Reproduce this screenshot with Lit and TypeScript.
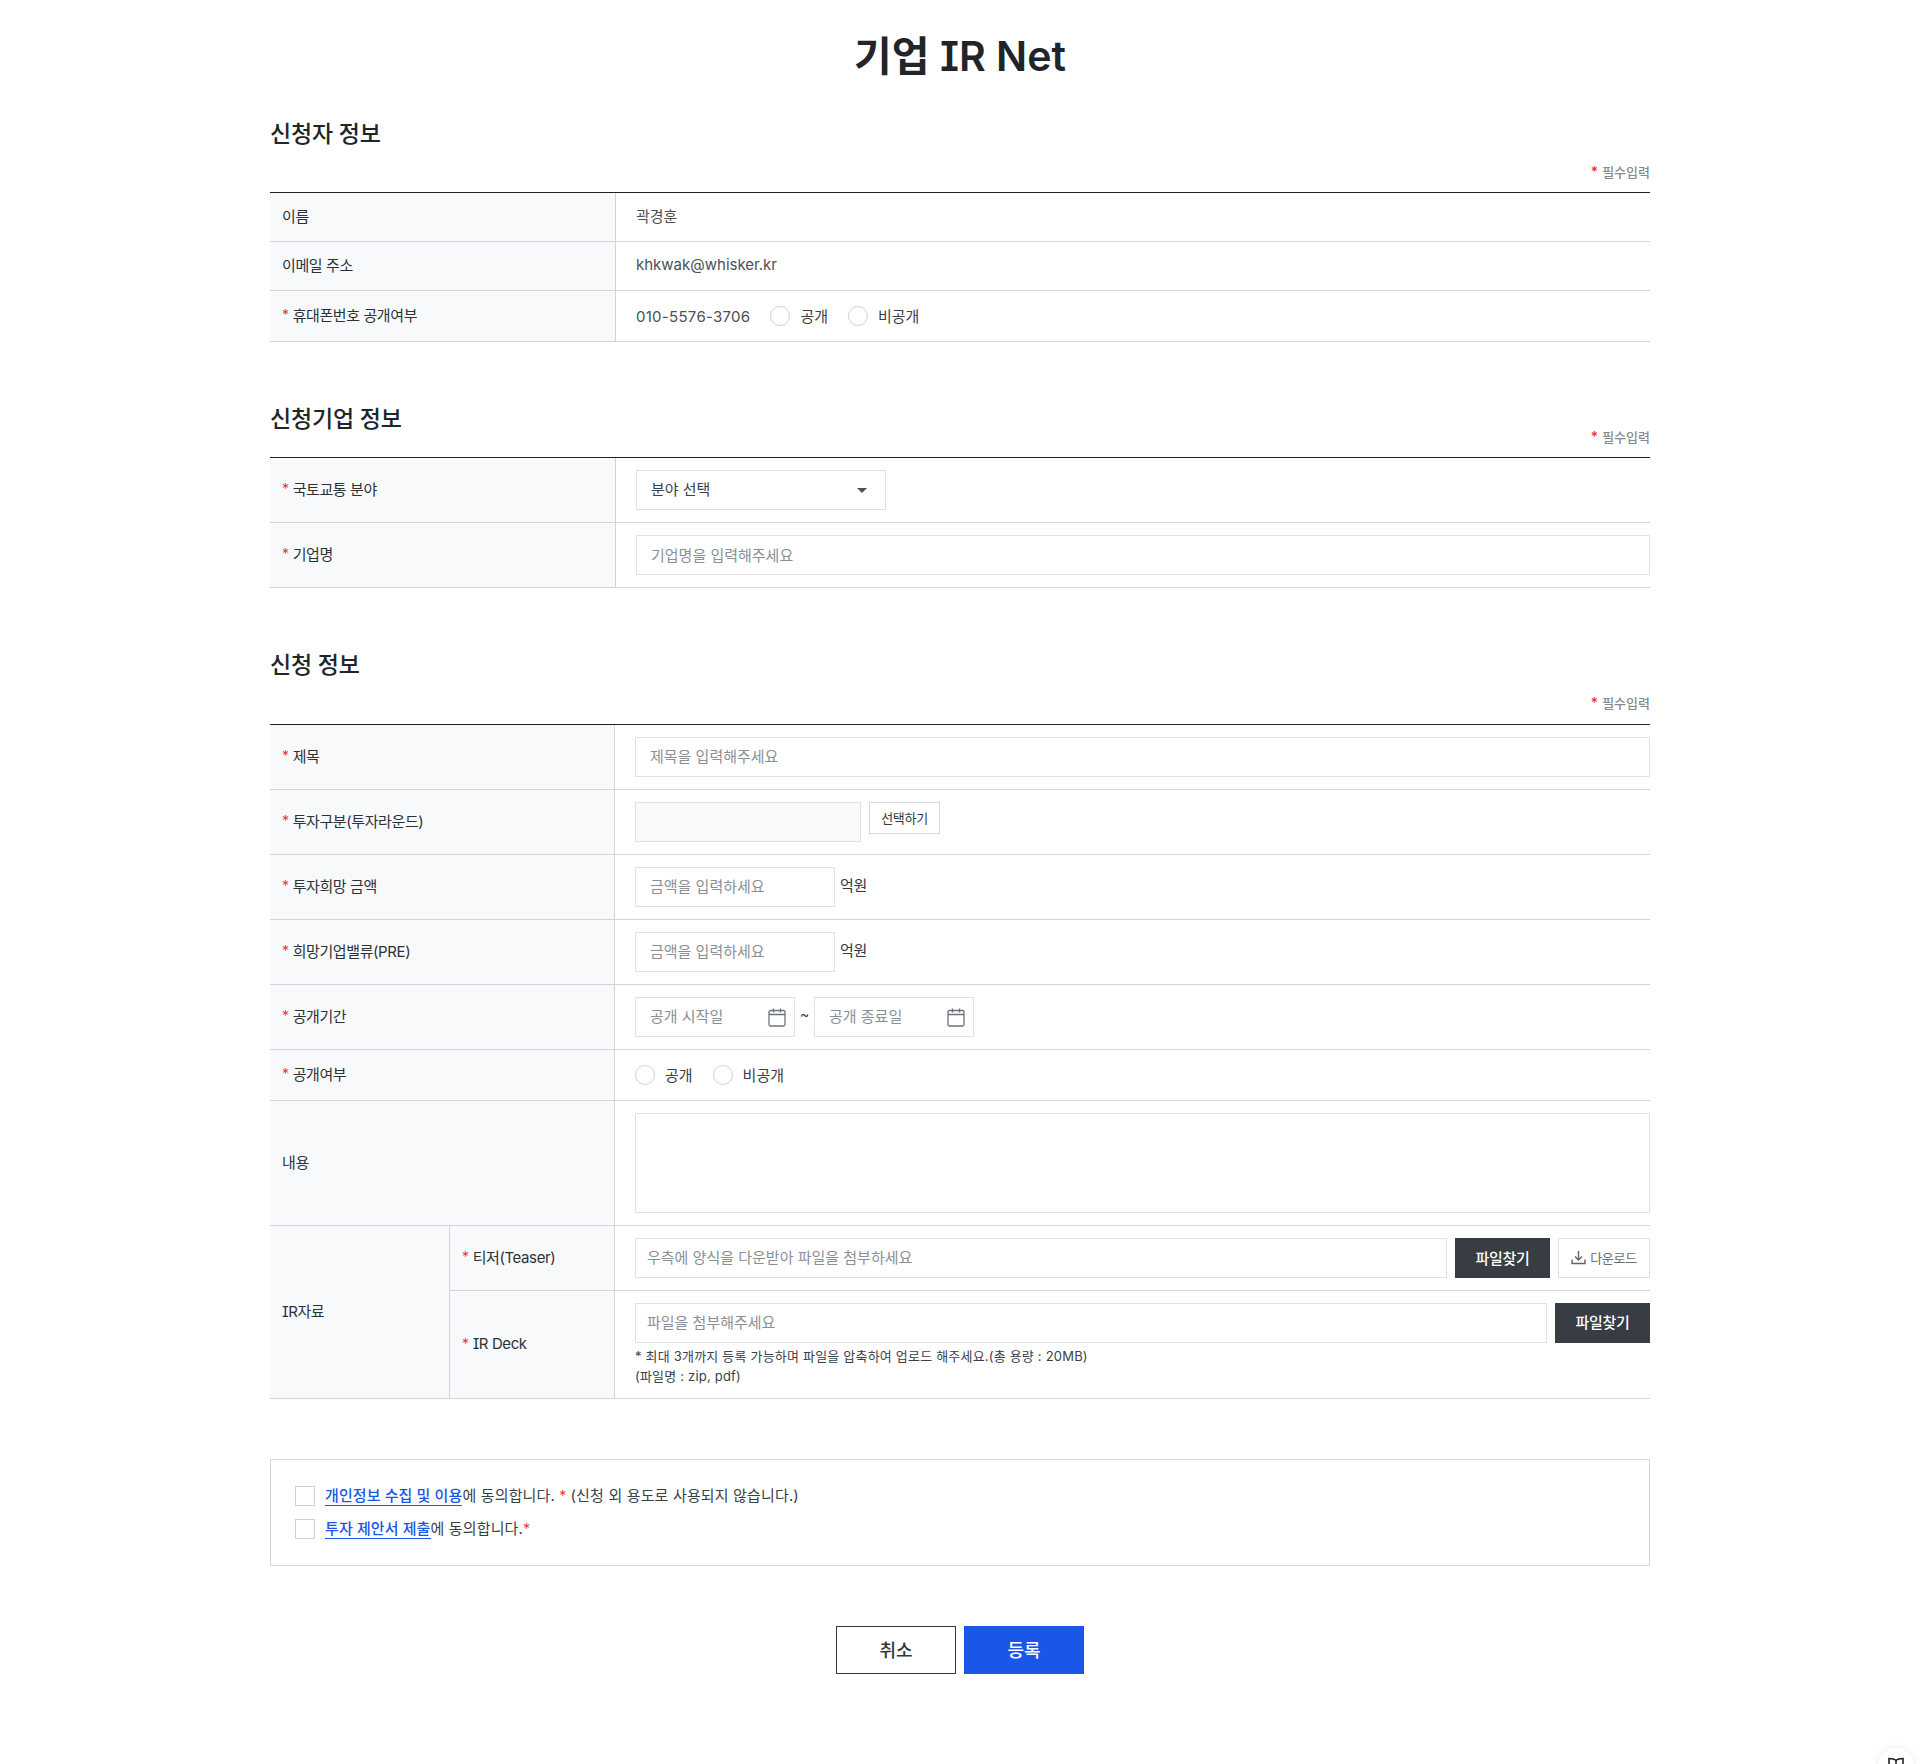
import { LitElement, html, css } from "lit";
import { customElement } from "lit/decorators.js";

const star = html`<i class="star">*</i>`;
const cal = html`<svg class="cal" viewBox="0 0 18 19" width="18" height="19" fill="none" stroke="#6b7280" stroke-width="1.3"><rect x="1" y="2.5" width="16" height="15.5" rx="1.5"/><path d="M1 6.500h16M5.500 .5v4M12.500 .5v4"/></svg>`;

@customElement("app-root")
export class AppRoot extends LitElement {
  static styles = css`
    :host { display: block; min-height: 1764px; background: #fff; color: #333a42; font-family: Inter, "Noto Sans CJK KR", sans-serif; font-feature-settings: "cv08"; font-size: 15px; letter-spacing: -0.3px; position: relative; overflow: hidden; }
    * { box-sizing: border-box; }
    .wrap { width: 1380px; margin: 0 auto; }
    h1 { margin: 0; padding-top: 26px; height: 86px; line-height: 60px; font-size: 41px; font-weight: 600; text-align: center; color: #212529; letter-spacing: 0; }
    h2 { margin: 0; height: 32px; line-height: 34px; font-size: 23px; font-weight: 500; color: #212529; letter-spacing: -0.2px; }
    .sec1 { margin-top: 31px; --col: 346px; }
    .sec2 { margin-top: 60px; --col: 346px; }
    .sec3 { margin-top: 60px; --col: 345px; }
    .req { height: 20px; line-height: 20px; font-size: 13px; font-weight: 500; color: #858a91; text-align: right; margin: 13px 0 10px; letter-spacing: 0; }
    .sec2 .req { margin-top: -7px; }
    .sec3 .req { margin-bottom: 11px; }
    .star { color: #e8343f; font-style: normal; margin-right: 4px; font-size: 14px; }
    .table { border-top: 1px solid #222; }
    .row { display: grid; grid-template-columns: var(--col) 1fr; border-bottom: 1px solid #d1d5db; }
    .th { background: #f8f9fb; border-right: 1px solid #d1d5db; padding: 0 12px 4px; display: flex; align-items: center; font-size: 15px; color: #2c3238; letter-spacing: -0.4px; }
    .th.deck { padding-bottom: 2px; }
    .td { padding: 12px 0 12px 20px; display: flex; align-items: flex-start; min-width: 0; }
    .td.mid { align-items: center; padding-top: 0; padding-bottom: 0; }
    .val { color: #4a5058; letter-spacing: 0; margin-bottom: 3px; }
    .h48 { height: 49px; }
    .h50 { height: 51px; }
    input[type="text"], textarea, .select { height: 40px; border: 1px solid #dee1e6; background: #fff; padding: 0 14px; font: inherit; font-size: 15px; letter-spacing: 0; color: #333a42; outline: none; border-radius: 0; }
    input[type="text"]::placeholder { color: #8b9096; opacity: 1; }
    .sec3 input[type="text"] { padding-bottom: 2px; }
    .full { width: 100%; flex: 1; min-width: 0; }
    textarea { display: block; width: 100%; height: 100px; resize: none; }
    .select { width: 250px; display: flex; align-items: center; justify-content: space-between; padding-right: 18px; padding-bottom: 3px; color: #3b4148; }
    .caret { width: 0; height: 0; border-left: 5px solid transparent; border-right: 5px solid transparent; border-top: 5px solid #4b5158; margin-top: 3px; }
    .tel { margin-right: 20px; font-size: 15px; letter-spacing: 0.28px; color: #4a5058; }
    .radio { appearance: none; margin: 0 10px 0 0; width: 20px; height: 20px; border: 1px solid #ced2d8; border-radius: 50%; background: #fff; flex: none; }
    .rlabel { margin-right: 20px; font-size: 15px; color: #3b4148; letter-spacing: 0; margin-bottom: 1px; }
    .ro { width: 226px; background: #f8f9fb !important; }
    .pick { height: 32px; width: 71px; margin-left: 8px; border: 1px solid #d5d8dd; background: #fff; font: inherit; font-size: 13px; color: #333a42; padding: 0 0 2px; letter-spacing: -0.3px; }
    .amt { width: 200px; }
    .unit { margin-left: 5px; line-height: 37px; font-size: 15px; }
    .date { width: 160px; height: 40px; border: 1px solid #dee1e6; display: flex; align-items: center; padding-right: 8px; flex: none; }
    .date input { border: 0 !important; background: transparent; width: 100%; min-width: 0; height: 38px; flex: 1; }
    .cal { flex: none; }
    .tilde { width: 19px; text-align: center; line-height: 34px; flex: none; font-size: 14px; }
    .ir { display: grid; grid-template-columns: 180px 1fr; border-bottom: 1px solid #d1d5db; }
    .ir .th { border-right: 1px solid #d1d5db; }
    .ir .row:last-child { border-bottom: 0; }
    .ir .row { grid-template-columns: 165px 1fr; }
    .ir .th.sub { padding-left: 12px; }
    .ir input[type="text"] { padding: 0 11px 2px; }
    .dark { flex: none; width: 95px; height: 40px; margin-left: 8px; border: 0; background: #383c43; color: #fff; font: inherit; font-size: 15px; font-weight: 500; padding: 0 0 2px; letter-spacing: -0.3px; }
    .line .dark { padding-bottom: 3px; }
    .down { flex: none; width: 92px; height: 40px; margin-left: 8px; border: 1px solid #dee1e6; background: #fff; color: #6b7077; font: inherit; font-size: 13px; padding: 0 0 1px; display: flex; align-items: center; justify-content: center; gap: 4px; letter-spacing: -0.3px; }
    .stack { flex: 1; min-width: 0; }
    .line { display: flex; }
    .note { font-size: 13px; line-height: 20px; color: #3b4148; margin-top: 3px; letter-spacing: 0.2px; }
    .agree { margin-top: 60px; height: 107px; border: 1px solid #d1d5db; padding: 26px 24px; display: flex; flex-direction: column; gap: 13px; }
    .chk { display: flex; align-items: flex-start; height: 20px; font-size: 15px; line-height: 19px; color: #3b4148; letter-spacing: 0.15px; white-space: pre; }
    .chk input { appearance: none; margin: 0 10px 0 0; width: 20px; height: 20px; border: 1px solid #ced2d8; background: #fff; flex: none; border-radius: 0; }
    .chk a { color: #1a56e8; text-decoration: none; border-bottom: 1px solid #1a56e8; line-height: 19px; font-weight: 500; letter-spacing: 0.1px; }
    .chk .star { margin: 0 4px 0 0; }
    .chk .star.end { margin: 0; }
    .btns { margin-top: 60px; display: flex; justify-content: center; gap: 8px; }
    .btns button { width: 120px; height: 48px; font: inherit; font-size: 18px; font-weight: 500; border: 0; padding: 0 0 2px; letter-spacing: 0; }
    .cancel { background: #fff; border: 1px solid #33373d !important; color: #33373d; }
    .ok { background: #1a56e8; color: #fff; }
    .fab { position: absolute; left: 1878px; top: 1748px; width: 36px; height: 36px; border-radius: 50%; background: #fff; box-shadow: 0 0 8px rgba(0,0,0,0.08); display: flex; justify-content: center; padding-top: 9px; }
  `;

  private head(t: string) {
    return html`<h2>${t}</h2><div class="req">${star}필수입력</div>`;
  }

  private radios() {
    return html`<input class="radio" type="radio" name="a" /><span class="rlabel">공개</span><input class="radio" type="radio" name="a" /><span class="rlabel">비공개</span>`;
  }

  render() {
    return html`
      <div class="wrap">
        <h1>기업 IR Net</h1>
        <section class="sec1">
          ${this.head("신청자 정보")}
          <div class="table">
            <div class="row h48"><div class="th">이름</div><div class="td mid"><span class="val">곽경훈</span></div></div>
            <div class="row h48"><div class="th">이메일 주소</div><div class="td mid"><span class="val">khkwak@whisker.kr</span></div></div>
            <div class="row h50"><div class="th">${star}휴대폰번호 공개여부</div><div class="td mid"><span class="tel">010-5576-3706</span>${this.radios()}</div></div>
          </div>
        </section>
        <section class="sec2">
          ${this.head("신청기업 정보")}
          <div class="table">
            <div class="row"><div class="th">${star}국토교통 분야</div><div class="td"><div class="select">분야 선택<span class="caret"></span></div></div></div>
            <div class="row"><div class="th">${star}기업명</div><div class="td"><input class="full" type="text" placeholder="기업명을 입력해주세요" /></div></div>
          </div>
        </section>
        <section class="sec3">
          ${this.head("신청 정보")}
          <div class="table">
            <div class="row"><div class="th">${star}제목</div><div class="td"><input class="full" type="text" placeholder="제목을 입력해주세요" /></div></div>
            <div class="row"><div class="th">${star}투자구분(투자라운드)</div><div class="td"><input class="ro" type="text" readonly /><button class="pick">선택하기</button></div></div>
            <div class="row"><div class="th">${star}투자희망 금액</div><div class="td"><input class="amt" type="text" placeholder="금액을 입력하세요" /><span class="unit">억원</span></div></div>
            <div class="row"><div class="th">${star}희망기업밸류(PRE)</div><div class="td"><input class="amt" type="text" placeholder="금액을 입력하세요" /><span class="unit">억원</span></div></div>
            <div class="row"><div class="th">${star}공개기간</div><div class="td"><div class="date"><input type="text" placeholder="공개 시작일" />${cal}</div><span class="tilde">~</span><div class="date"><input type="text" placeholder="공개 종료일" />${cal}</div></div></div>
            <div class="row h50"><div class="th">${star}공개여부</div><div class="td mid">${this.radios()}</div></div>
            <div class="row"><div class="th">내용</div><div class="td"><textarea></textarea></div></div>
            <div class="ir">
              <div class="th">IR자료</div>
              <div>
                <div class="row"><div class="th sub">${star}티저(Teaser)</div><div class="td"><input class="full" type="text" placeholder="우측에 양식을 다운받아 파일을 첨부하세요" /><button class="dark">파일찾기</button><button class="down"><svg width="15" height="15" viewBox="0 0 15 15" fill="none" stroke="#5f656c" stroke-width="1.4"><path d="M7.500 1v8.500M4 6.500l3.500 3.500L11 6.500M1 9.500v4h13v-4"/></svg>다운로드</button></div></div>
                <div class="row"><div class="th sub deck">${star}IR Deck</div><div class="td"><div class="stack"><div class="line"><input class="full" type="text" placeholder="파일을 첨부해주세요" /><button class="dark">파일찾기</button></div><div class="note">* 최대 3개까지 등록 가능하며 파일을 압축하여 업로드 해주세요.(총 용량 : 20MB)<br />(파일명 : zip, pdf)</div></div></div></div>
              </div>
            </div>
          </div>
        </section>
        <div class="agree">
          <label class="chk"><input type="checkbox" /><a>개인정보 수집 및 이용</a>에 동의합니다. ${star}(신청 외 용도로 사용되지 않습니다.)</label>
          <label class="chk"><input type="checkbox" /><a>투자 제안서 제출</a>에 동의합니다.<i class="star end">*</i></label>
        </div>
        <div class="btns"><button class="cancel">취소</button><button class="ok">등록</button></div>
      </div>
      <div class="fab"><svg width="18" height="16" viewBox="0 0 18 16" fill="none" stroke="#222" stroke-width="1.6"><path d="M9 3.500C7.500 2 5 1.500 2 1.500v11c3 0 5.500.5 7 2 1.500-1.500 4-2 7-2v-11c-3 0-5.500.5-7 2zM9 3.500v11"/></svg></div>
    `;
  }
}
